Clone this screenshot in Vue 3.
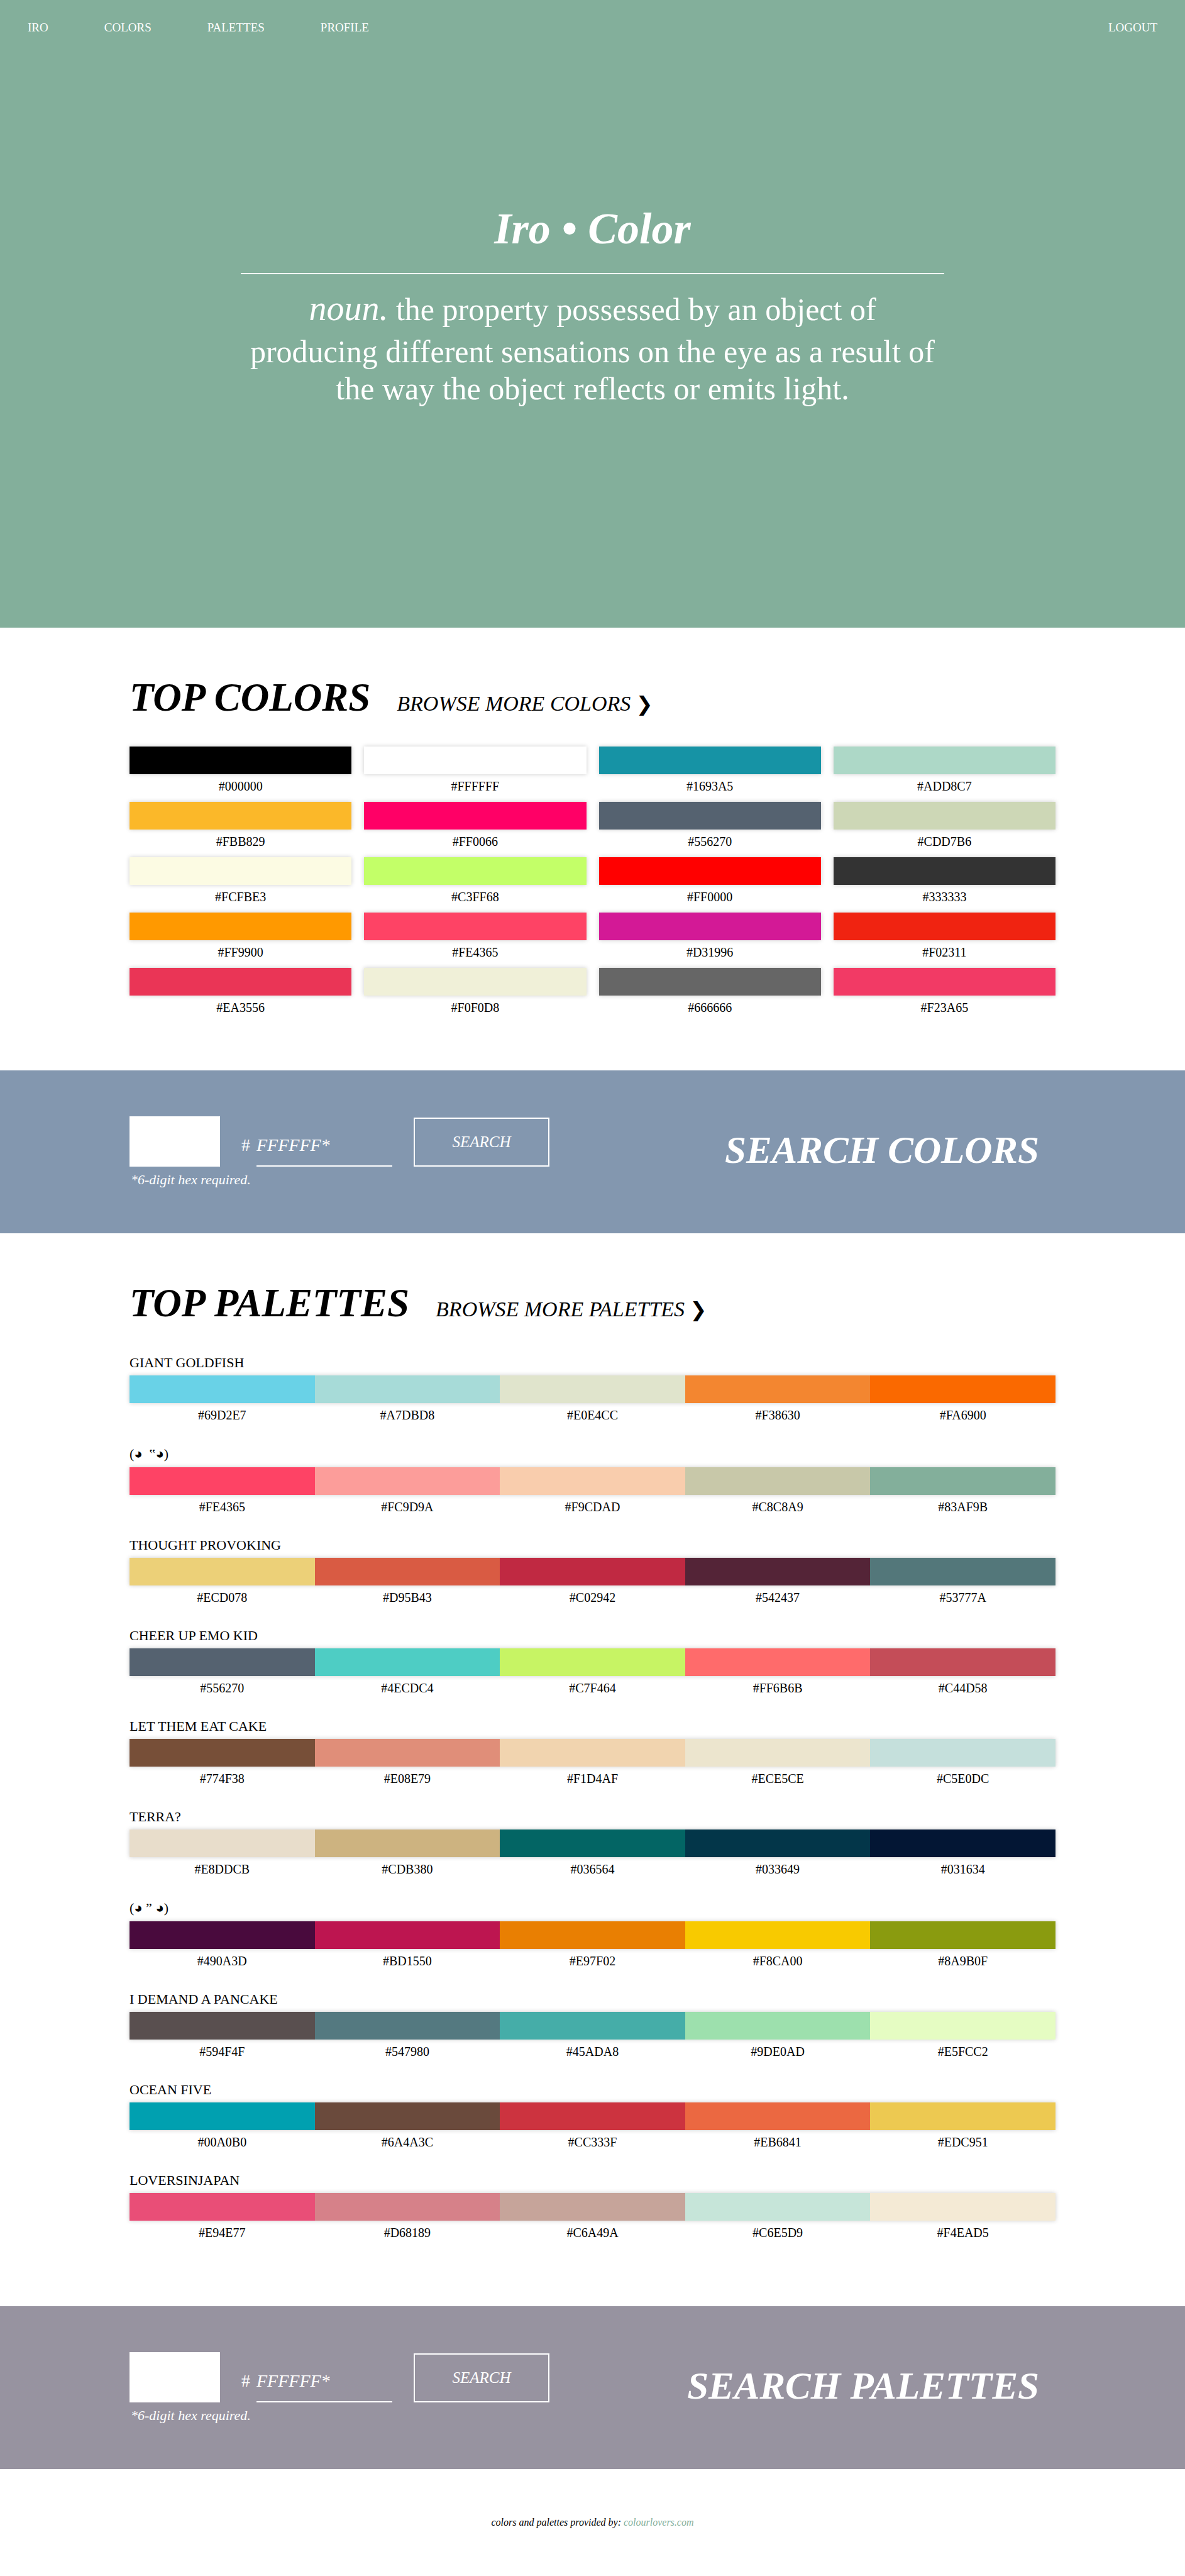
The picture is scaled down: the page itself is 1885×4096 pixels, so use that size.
<script setup>
import { ref } from 'vue'

const links = ['IRO', 'COLORS', 'PALETTES', 'PROFILE']

const colors = [
  '000000', 'FFFFFF', '1693A5', 'ADD8C7',
  'FBB829', 'FF0066', '556270', 'CDD7B6',
  'FCFBE3', 'C3FF68', 'FF0000', '333333',
  'FF9900', 'FE4365', 'D31996', 'F02311',
  'EA3556', 'F0F0D8', '666666', 'F23A65'
]

const palettes = [
  { name: 'GIANT GOLDFISH', colors: ['69D2E7', 'A7DBD8', 'E0E4CC', 'F38630', 'FA6900'] },
  { name: '(◕\u2002‟◕)', symbols: true, colors: ['FE4365', 'FC9D9A', 'F9CDAD', 'C8C8A9', '83AF9B'] },
  { name: 'THOUGHT PROVOKING', colors: ['ECD078', 'D95B43', 'C02942', '542437', '53777A'] },
  { name: 'CHEER UP EMO KID', colors: ['556270', '4ECDC4', 'C7F464', 'FF6B6B', 'C44D58'] },
  { name: 'LET THEM EAT CAKE', colors: ['774F38', 'E08E79', 'F1D4AF', 'ECE5CE', 'C5E0DC'] },
  { name: 'TERRA?', colors: ['E8DDCB', 'CDB380', '036564', '033649', '031634'] },
  { name: '(◕ ” ◕)', symbols: true, colors: ['490A3D', 'BD1550', 'E97F02', 'F8CA00', '8A9B0F'] },
  { name: 'I DEMAND A PANCAKE', colors: ['594F4F', '547980', '45ADA8', '9DE0AD', 'E5FCC2'] },
  { name: 'OCEAN FIVE', colors: ['00A0B0', '6A4A3C', 'CC333F', 'EB6841', 'EDC951'] },
  { name: 'LOVERSINJAPAN', colors: ['E94E77', 'D68189', 'C6A49A', 'C6E5D9', 'F4EAD5'] }
]

const colorQuery = ref('')
const paletteQuery = ref('')

const preview = (hex) => (/^[0-9a-f]{6}$/i.test(hex) ? '#' + hex : '#FFFFFF')
</script>

<template>
  <div class="page">
    <header class="hero">
      <nav class="nav">
        <a v-for="link in links" :key="link" href="#">{{ link }}</a>
        <a class="logout" href="#">LOGOUT</a>
      </nav>
      <div class="definition">
        <h1>Iro • Color</h1>
        <p>
          <em>noun.</em> the property possessed by an object of<br>
          producing different sensations on the eye as a result of<br>
          the way the object reflects or emits light.
        </p>
      </div>
    </header>

    <main>
      <section class="section">
        <div class="section-head">
          <h2>TOP COLORS</h2>
          <a href="#">BROWSE MORE COLORS <span class="arrow">❯</span></a>
        </div>
        <ul class="color-grid">
          <li v-for="hex in colors" :key="hex">
            <div class="swatch" :style="{ backgroundColor: '#' + hex }"></div>
            <div class="hex">#{{ hex }}</div>
          </li>
        </ul>
      </section>

      <section class="band band-colors">
        <form @submit.prevent>
          <div class="controls">
            <div class="preview" :style="{ backgroundColor: preview(colorQuery) }"></div>
            <div class="field">
              <label for="color-hex">#</label>
              <input id="color-hex" v-model="colorQuery" type="text" maxlength="6" placeholder="FFFFFF*">
            </div>
            <button type="submit">SEARCH</button>
          </div>
          <p class="hint">*6-digit hex required.</p>
        </form>
        <h2>SEARCH COLORS</h2>
      </section>

      <section class="section">
        <div class="section-head">
          <h2>TOP PALETTES</h2>
          <a href="#">BROWSE MORE PALETTES <span class="arrow">❯</span></a>
        </div>
        <ul class="palette-list">
          <li v-for="palette in palettes" :key="palette.name">
            <h3 :class="{ symbols: palette.symbols }">{{ palette.name }}</h3>
            <div class="strip">
              <div
                v-for="hex in palette.colors"
                :key="hex"
                :style="{ backgroundColor: '#' + hex }"
              ></div>
            </div>
            <div class="strip-labels">
              <div v-for="hex in palette.colors" :key="hex" class="hex">#{{ hex }}</div>
            </div>
          </li>
        </ul>
      </section>

      <section class="band band-palettes">
        <form @submit.prevent>
          <div class="controls">
            <div class="preview" :style="{ backgroundColor: preview(paletteQuery) }"></div>
            <div class="field">
              <label for="palette-hex">#</label>
              <input id="palette-hex" v-model="paletteQuery" type="text" maxlength="6" placeholder="FFFFFF*">
            </div>
            <button type="submit">SEARCH</button>
          </div>
          <p class="hint">*6-digit hex required.</p>
        </form>
        <h2>SEARCH PALETTES</h2>
      </section>
    </main>

    <footer class="footer">
      colors and palettes provided by: <a href="#">colourlovers.com</a>
    </footer>
  </div>
</template>

<style>
body {
  margin: 0;
  background: #fff;
}
</style>

<style scoped>
.page {
  color: #000;
  font-family: "Liberation Serif", "DejaVu Sans", "Noto Sans CJK JP", serif;
}

h1,
h2,
h3,
p,
ul {
  margin: 0;
  padding: 0;
}

ul {
  list-style: none;
}

a {
  color: inherit;
  text-decoration: none;
}

.hero {
  background: #83af9b;
  color: #fff;
  padding-bottom: 350px;
}

.nav {
  display: flex;
  gap: 89px;
  padding: 33px 44px 0;
  font-size: 19px;
  line-height: 22px;
}

.logout {
  margin-left: auto;
}

.definition {
  max-width: 1119px;
  margin: 269px auto 0;
  text-align: center;
}

h1 {
  padding-bottom: 30px;
  border-bottom: 2px solid #fff;
  font-size: 70px;
  font-style: italic;
  font-weight: 700;
  line-height: 80px;
}

.definition p {
  padding-top: 14px;
  font-size: 50px;
  line-height: 59px;
}

.definition em {
  font-size: 56px;
  line-height: 80px;
}

.section {
  padding: 76px 206px 81px;
}

.section-head {
  display: flex;
  align-items: baseline;
  gap: 42px;
  margin-bottom: 43px;
  font-style: italic;
}

.section-head a {
  font-size: 34px;
  line-height: 40px;
}

.arrow {
  font-family: "DejaVu Sans", sans-serif;
  font-size: 32px;
  font-weight: 700;
}

h2 {
  font-size: 61px;
  font-style: italic;
  font-weight: 700;
  line-height: 70px;
}

.section-head h2 {
  font-size: 63px;
}

.color-grid {
  display: grid;
  grid-template-columns: repeat(4, 1fr);
  gap: 6px 20px;
}

.swatch,
.strip {
  height: 44px;
  box-shadow: 0 0 7px rgba(0, 0, 0, 0.2);
}

.hex {
  font-size: 20px;
  line-height: 38px;
  text-align: center;
}

.palette-list {
  display: flex;
  flex-direction: column;
  gap: 25px;
  padding-bottom: 17px;
}

h3 {
  margin-bottom: 3px;
  font-size: 22px;
  font-weight: 400;
  line-height: 34px;
}

.symbols {
  line-height: 36px;
}

.strip,
.strip-labels {
  display: grid;
  grid-template-columns: repeat(5, 1fr);
}

.band {
  display: flex;
  align-items: flex-start;
  justify-content: space-between;
  padding: 73px 206px 71px;
  color: #fff;
}

.band-colors {
  background: #8397af;
}

.band-palettes {
  background: #9793a0;
}

.band h2 {
  margin: 19px 26px 0 0;
}

.controls {
  display: flex;
  align-items: flex-end;
  gap: 34px;
}

.preview {
  width: 144px;
  height: 80px;
}

.field {
  display: flex;
  align-items: baseline;
  gap: 10px;
  font-size: 28px;
}

input,
button {
  box-sizing: border-box;
  width: 216px;
  margin: 0;
  border: 0 solid #fff;
  border-radius: 0;
  background: transparent;
  color: #fff;
  font-family: inherit;
  font-style: italic;
}

input {
  height: 66px;
  padding: 0;
  border-bottom-width: 2px;
  font-size: 28px;
}

input::placeholder {
  color: #fff;
  opacity: 1;
}

button {
  height: 78px;
  border-width: 2px;
  font-size: 25px;
}

.hint {
  margin-top: 7px;
  padding-left: 2px;
  font-size: 22px;
  font-style: italic;
  line-height: 28px;
}

.footer {
  padding: 75px 0;
  font-size: 16px;
  font-style: italic;
  line-height: 20px;
  text-align: center;
}

.footer a {
  color: #83af9b;
}
</style>
